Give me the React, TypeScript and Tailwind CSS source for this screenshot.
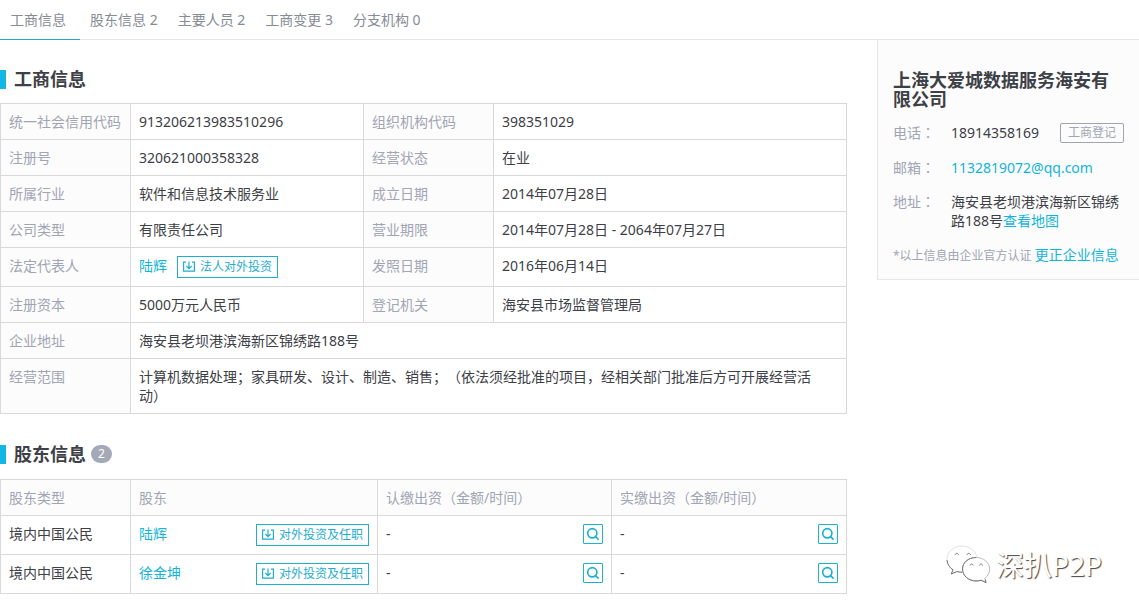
import React from "react";

const tabs = [
  { label: "工商信息", href: "#base" },
  { label: "股东信息 2", href: "#partners" },
  { label: "主要人员 2", href: "#members" },
  { label: "工商变更 3", href: "#changes" },
  { label: "分支机构 0", href: "#branches" },
];

const shareholders = [
  { type: "境内中国公民", name: "陆辉" },
  { type: "境内中国公民", name: "徐金坤" },
];

const InvestIcon = () => (
  <svg
    width="14"
    height="12"
    viewBox="0 0 14 12"
    fill="none"
    stroke="currentColor"
    strokeWidth="1.2"
    aria-hidden="true"
  >
    <path d="M4 1.2H1.6v9h10.8v-9H10" />
    <path d="M7 0.5v7M4.4 5L7 7.6L9.600 5" />
  </svg>
);

const SearchIcon = () => (
  <svg
    width="14"
    height="14"
    viewBox="0 0 14 14"
    fill="none"
    stroke="currentColor"
    strokeWidth="1.7"
    aria-hidden="true"
  >
    <circle cx="6.3" cy="6.3" r="4.6" />
    <path d="M9 9.2L12.6 12.6" />
  </svg>
);

const InvestButton = ({ label }: { label: string }) => (
  <button
    type="button"
    className="flex h-[22px] shrink-0 items-center gap-1 border border-[#1fadd0] px-1 pr-[5px] text-xs whitespace-nowrap text-[#1fadd0]"
  >
    <InvestIcon />
    {label}
  </button>
);

const SearchButton = ({ label }: { label: string }) => (
  <button
    type="button"
    aria-label={label}
    className="flex size-5 items-center justify-center rounded-[1px] border border-[#1fb0cf] text-[#1fb0cf]"
  >
    <SearchIcon />
  </button>
);

const SectionTitle = ({ title, count }: { title: string; count?: number }) => (
  <div className="flex h-5 items-center">
    <span className="h-[19px] w-1.5 bg-[#12b7e6]" />
    <h2 className="ml-2 text-lg leading-5 font-bold text-[#3d4047]">{title}</h2>
    {count !== undefined && (
      <span className="ml-[5px] flex h-[18px] w-[21px] items-center justify-center rounded-full bg-[#a4a9b8] text-xs text-white">
        {count}
      </span>
    )}
  </div>
);

const Label = ({ children }: { children: React.ReactNode }) => (
  <th
    scope="row"
    className="border border-[#d9d9d9] bg-[#fcfcfc] p-2 text-left align-top font-normal text-[#a1a5b3]"
  >
    {children}
  </th>
);

const Value = ({ children, span }: { children: React.ReactNode; span?: number }) => (
  <td colSpan={span} className="border border-[#d9d9d9] p-2 align-top">
    {children}
  </td>
);

const HeadCell = ({ children }: { children: React.ReactNode }) => (
  <th
    scope="col"
    className="border border-[#d9d9d9] bg-[#fcfcfc] p-2 text-left font-normal text-[#a1a5b3]"
  >
    {children}
  </th>
);

// full-width colon centred in its own square
const Colon = () => (
  <span lang="zh-TW" className="font-['Noto_Sans_CJK_TC',sans-serif]">
    ：
  </span>
);

const BaseInfo = () => (
  <table className="mt-[14px] w-full table-fixed border-collapse">
    <colgroup>
      <col className="w-[130px]" />
      <col className="w-[233px]" />
      <col className="w-[130px]" />
      <col />
    </colgroup>
    <tbody>
      <tr>
        <Label>统一社会信用代码</Label>
        <Value>913206213983510296</Value>
        <Label>组织机构代码</Label>
        <Value>398351029</Value>
      </tr>
      <tr>
        <Label>注册号</Label>
        <Value>320621000358328</Value>
        <Label>经营状态</Label>
        <Value>在业</Value>
      </tr>
      <tr>
        <Label>所属行业</Label>
        <Value>软件和信息技术服务业</Value>
        <Label>成立日期</Label>
        <Value>2014年07月28日</Value>
      </tr>
      <tr>
        <Label>公司类型</Label>
        <Value>有限责任公司</Value>
        <Label>营业期限</Label>
        <Value>2014年07月28日 - 2064年07月27日</Value>
      </tr>
      <tr>
        <Label>法定代表人</Label>
        <Value>
          <div className="flex items-start gap-[10px]">
            <a href="#person" className="text-[#12b5d8]">
              陆辉
            </a>
            <InvestButton label="法人对外投资" />
          </div>
        </Value>
        <Label>发照日期</Label>
        <Value>2016年06月14日</Value>
      </tr>
      <tr>
        <Label>注册资本</Label>
        <Value>5000万元人民币</Value>
        <Label>登记机关</Label>
        <Value>海安县市场监督管理局</Value>
      </tr>
      <tr>
        <Label>企业地址</Label>
        <Value span={3}>海安县老坝港滨海新区锦绣路188号</Value>
      </tr>
      <tr>
        <Label>经营范围</Label>
        <Value span={3}>
          计算机数据处理；家具研发、设计、制造、销售；（依法须经批准的项目，经相关部门批准后方可开展经营活动）
        </Value>
      </tr>
    </tbody>
  </table>
);

const Shareholders = () => (
  <table className="mt-[15px] w-full table-fixed border-collapse">
    <colgroup>
      <col className="w-[130px]" />
      <col className="w-[247px]" />
      <col className="w-[234px]" />
      <col />
    </colgroup>
    <thead>
      <tr>
        <HeadCell>股东类型</HeadCell>
        <HeadCell>股东</HeadCell>
        <HeadCell>认缴出资（金额/时间）</HeadCell>
        <HeadCell>实缴出资（金额/时间）</HeadCell>
      </tr>
    </thead>
    <tbody>
      {shareholders.map((item) => (
        <tr key={item.name}>
          <Value>{item.type}</Value>
          <Value>
            <div className="flex items-start justify-between">
              <a href="#person" className="text-[#12b5d8]">
                {item.name}
              </a>
              <InvestButton label="对外投资及任职" />
            </div>
          </Value>
          <Value>
            <div className="flex items-start justify-between">
              <span>-</span>
              <SearchButton label="查看认缴出资" />
            </div>
          </Value>
          <Value>
            <div className="flex items-start justify-between">
              <span>-</span>
              <SearchButton label="查看实缴出资" />
            </div>
          </Value>
        </tr>
      ))}
    </tbody>
  </table>
);

const ContactCard = () => (
  <div className="border-b border-l border-[#e6e6e6] bg-[#fcfcfc] pt-[31px] pr-[15px] pb-[14px] pl-[15px]">
    <h1 className="text-lg leading-[19px] font-bold text-[#3d4047]">
      上海大爱城数据服务海安有限公司
    </h1>
    <dl className="mt-[14px] flex flex-col gap-[15px]">
      <div className="flex">
        <dt className="w-[58px] shrink-0 text-[#a1a5b3]">
          电话
          <Colon />
        </dt>
        <dd className="flex flex-1 justify-between">
          18914358169
          <button
            type="button"
            className="h-5 rounded-[2px] border border-[#a1a5b3] px-[7px] text-xs leading-4 whitespace-nowrap text-[#a1a5b3]"
          >
            工商登记
          </button>
        </dd>
      </div>
      <div className="flex">
        <dt className="w-[58px] shrink-0 text-[#a1a5b3]">
          邮箱
          <Colon />
        </dt>
        <dd>
          <a href="mailto:1132819072@qq.com" className="text-[#12b5d8]">
            1132819072@qq.com
          </a>
        </dd>
      </div>
      <div className="flex">
        <dt className="w-[58px] shrink-0 text-[#a1a5b3]">
          地址
          <Colon />
        </dt>
        <dd>
          海安县老坝港滨海新区锦绣路188号
          <a href="#map" className="text-[#12b5d8]">
            查看地图
          </a>
        </dd>
      </div>
    </dl>
    <p className="mt-[15px] text-xs leading-[19px] whitespace-nowrap text-[#a1a5b3]">
      *以上信息由企业官方认证{" "}
      <a href="#correct" className="text-sm leading-[19px] text-[#12b5d8]">
        更正企业信息
      </a>
    </p>
  </div>
);

const Watermark = () => (
  <div className="mr-[37px] mb-[30px] flex items-center gap-[5px] self-end">
    <svg width="46" height="42" viewBox="0 0 46 42" fill="none" aria-hidden="true">
      <path
        d="M17 2C8.500 2 2 7.800 2 15.200c0 4.600 2.500 8.300 6 10.600L6.200 30l5.600-2.400c2 .6 4 .9 6.200.8C26 28 32 22.500 32 15.200S25.500 2 17 2z"
        fill="#fff"
        stroke="#e2e2e2"
      />
      <path d="M2 16c.3 4.300 2.600 7.600 6 9.800L6.200 30l5.600-2.400 5.200.7" stroke="#777" />
      <path d="M10 11c.6-2.200 3-2.200 3.600 0M22 11c.6-2.200 3-2.200 3.600 0" stroke="#777" />
      <path
        d="M31 13.500c-7.500 0-13.500 5-13.500 11.500S23.500 37 31 37c1.800 0 3.500-.3 5-.8l5 2.400-1.300-4.200c3-2.200 5-5.500 5-9.400 0-6.500-6.200-11.500-13.700-11.500z"
        fill="#fff"
        stroke="#bbb"
      />
      <path
        d="M31 13.500c-7.500 0-13.500 5-13.500 11.500S23.500 37 31 37c1.800 0 3.500-.3 5-.8l5 2.400-.6-3"
        stroke="#777"
      />
      <path d="M25 21.500c.5-2 2.700-2 3.200 0M34.500 21.500c.5-2 2.700-2 3.200 0" stroke="#777" />
    </svg>
    <span className="text-[28px] leading-9 text-white [text-shadow:1px_1px_1px_#444]">
      深扒P2P
    </span>
  </div>
);

const App: React.FC = () => {
  return (
    <div
      lang="zh-CN"
      className="flex min-h-screen flex-col bg-white font-['Noto_Sans','Noto_Sans_CJK_SC',sans-serif] text-sm leading-[19px] text-[#3d4047] [text-spacing-trim:space-all]"
    >
      <nav className="flex h-10 text-[#868b96]">
        {tabs.map((tab, index) => (
          <a
            key={tab.label}
            href={tab.href}
            className={
              index === 0
                ? "min-w-20 border-b border-b-[#23a9cb] px-[10px] pt-[10px]"
                : "border-b border-b-[#e6e6e6] px-[10px] pt-[10px]"
            }
          >
            {tab.label}
          </a>
        ))}
        <span className="grow border-b border-b-[#e6e6e6]" />
      </nav>
      <div className="flex grow gap-[30px]">
        <main className="min-w-0 flex-1 pt-[29px]">
          <section id="base">
            <SectionTitle title="工商信息" />
            <BaseInfo />
          </section>
          <section id="partners" className="mt-[30px]">
            <SectionTitle title="股东信息" count={2} />
            <Shareholders />
          </section>
        </main>
        <aside className="flex w-[262px] shrink-0 flex-col justify-between">
          <ContactCard />
          <Watermark />
        </aside>
      </div>
    </div>
  );
};

export default App;
